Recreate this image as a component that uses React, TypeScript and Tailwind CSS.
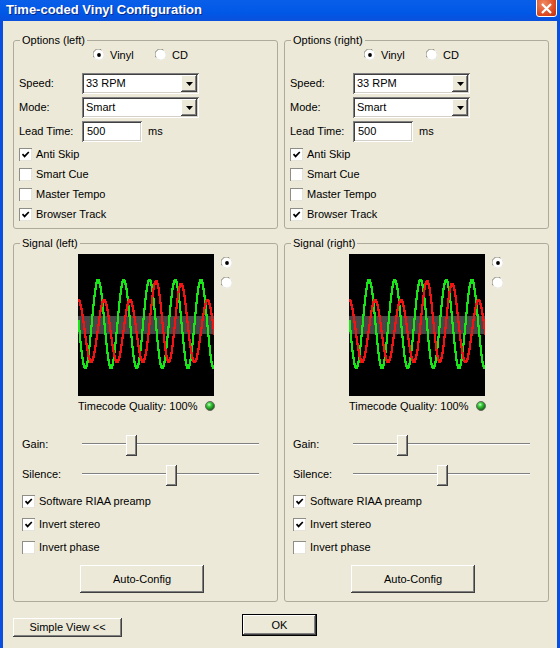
import React from "react"

const SCOPE_W = 136
const SCOPE_H = 142

// staircase path, the scope is drawn one pixel column at a time
function stairs(fn: (x: number) => number) {
  let d = `M0,${Math.round(fn(0))}`
  for (let x = 1; x <= SCOPE_W; x++) {
    d += `H${x}V${Math.round(fn(x))}`
  }
  return d
}

const greenWave = (x: number) => 70 - 44 * Math.cos((2 * Math.PI * (x - 19.6)) / 25.7)

const redWave = (x: number) => {
  const bump = Math.exp(-Math.pow((x - 89) / 20, 4))
  const peak = 46 - 21 * bump
  const trough = 108
  const c = (peak + trough) / 2
  const a = (trough - peak) / 2
  return c - a * Math.cos((2 * Math.PI * (x - 25.6)) / 25.85)
}

const GREEN_D = stairs(greenWave)
const RED_D = stairs(redWave)

function Scope() {
  return (
    <svg width={SCOPE_W} height={SCOPE_H} className="block bg-black" shapeRendering="crispEdges">
      <rect x={0} y={62} width={SCOPE_W} height={18} fill="#474747" />
      <path d={GREEN_D} fill="none" stroke="#19e619" strokeWidth={2} />
      <path d={RED_D} fill="none" stroke="#f01414" strokeWidth={2} />
    </svg>
  )
}

function Radio({ checked }: { checked?: boolean }) {
  return (
    <svg width={12} height={12} className="block shrink-0">
      <circle cx={6} cy={6} r={5.5} fill="#fff" />
      <path d="M1.2 8.5 A5.2 5.2 0 0 1 8.5 1.2" fill="none" stroke="#8a8a82" strokeWidth={1} />
      <path d="M2.3 9.6 A5.2 5.2 0 0 0 9.8 2.4" fill="none" stroke="#e4e2d8" strokeWidth={1} />
      {checked && <circle cx={6} cy={6} r={1.9} fill="#000" />}
    </svg>
  )
}

function Checkbox({ checked, label }: { checked?: boolean; label: string }) {
  return (
    <div className="flex items-center gap-[4px]">
      <div className="w-[13px] h-[13px] bg-white flex items-center justify-center shadow-[inset_1px_1px_0_#8e8e86,inset_-1px_-1px_0_#e6e4da]">
        {checked && (
          <svg width={9} height={9}>
            <path d="M1.5 4.2 L3.6 6.4 L7.8 2" fill="none" stroke="#000" strokeWidth={1.7} />
          </svg>
        )}
      </div>
      <span className="whitespace-nowrap">{label}</span>
    </div>
  )
}

function Select({ value }: { value: string }) {
  return (
    <div className="w-[117px] h-[21px] flex bg-white p-[2px] shadow-[inset_1px_1px_0_#808080,inset_-1px_-1px_0_#fff,inset_2px_2px_0_#404040,inset_-2px_-2px_0_#d4d0c8]">
      <span className="flex-1 pl-[2px] leading-[17px]">{value}</span>
      <div className="w-[16px] h-[17px] bg-[#ece9d8] flex items-center justify-center shadow-[inset_-1px_-1px_0_#404040,inset_1px_1px_0_#fff,inset_-2px_-2px_0_#808080]">
        <svg width={7} height={4}>
          <path d="M0 0 H7 L3.5 4 Z" fill="#000" />
        </svg>
      </div>
    </div>
  )
}

function Button({ label, className, isDefault }: { label: string; className: string; isDefault?: boolean }) {
  return (
    <div
      className={
        "flex items-center justify-center bg-[#ece9d8] " +
        (isDefault
          ? "border border-black shadow-[inset_-1px_-1px_0_#404040,inset_1px_1px_0_#fff,inset_-2px_-2px_0_#808080] "
          : "shadow-[inset_-1px_-1px_0_#404040,inset_1px_1px_0_#fff,inset_-2px_-2px_0_#808080] ") +
        className
      }
    >
      {label}
    </div>
  )
}

function Slider({ thumb }: { thumb: number }) {
  return (
    <div className="relative w-[177px] h-[24px]">
      <div className="absolute left-0 right-0 top-[11px] h-[2px] border-t border-[#808080] bg-white" />
      <div
        className="absolute top-[3px] w-[11px] h-[21px] bg-[#ece9d8] shadow-[inset_-1px_-1px_0_#404040,inset_1px_1px_0_#fff,inset_-2px_-2px_0_#808080]"
        style={{ left: thumb }}
      />
    </div>
  )
}

function Led() {
  return (
    <svg width={10} height={10} className="block">
      <defs>
        <radialGradient id="led" cx="40%" cy="35%" r="65%">
          <stop offset="0%" stopColor="#c8ffc8" />
          <stop offset="35%" stopColor="#3ccf3c" />
          <stop offset="100%" stopColor="#0b5c0b" />
        </radialGradient>
      </defs>
      <circle cx={5} cy={5} r={4.5} fill="url(#led)" stroke="#6b6b63" strokeWidth={1} />
    </svg>
  )
}

function OptionsGroup({ side }: { side: string }) {
  return (
    <fieldset className="w-[265px] min-w-0 border border-[#aeab9d] rounded-[3px] pl-[5px] pb-[4px]">
      <legend className="ml-[1px] px-[2px] leading-[13px]">Options ({side})</legend>
      <div className="h-[16px] flex items-center pl-[74px]">
        <div className="w-[62px] flex items-center gap-[5px]">
          <Radio checked />
          <span>Vinyl</span>
        </div>
        <div className="flex items-center gap-[5px]">
          <Radio />
          <span>CD</span>
        </div>
      </div>
      <div className="mt-[10px] flex items-center">
        <span className="w-[63px]">Speed:</span>
        <Select value="33 RPM" />
      </div>
      <div className="mt-[3px] flex items-center">
        <span className="w-[63px]">Mode:</span>
        <Select value="Smart" />
      </div>
      <div className="mt-[3px] flex items-center">
        <span className="w-[63px]">Lead Time:</span>
        <div className="w-[60px] h-[21px] bg-white pl-[5px] leading-[21px] shadow-[inset_1px_1px_0_#808080,inset_-1px_-1px_0_#fff,inset_2px_2px_0_#404040,inset_-2px_-2px_0_#d4d0c8]">
          500
        </div>
        <span className="ml-[6px]">ms</span>
      </div>
      <div className="mt-[2px] flex flex-col">
        <div className="h-[20px] flex items-center"><Checkbox checked label="Anti Skip" /></div>
        <div className="h-[20px] flex items-center"><Checkbox label="Smart Cue" /></div>
        <div className="h-[20px] flex items-center"><Checkbox label="Master Tempo" /></div>
        <div className="h-[20px] flex items-center"><Checkbox checked label="Browser Track" /></div>
      </div>
    </fieldset>
  )
}

function SignalGroup({ side }: { side: string }) {
  return (
    <fieldset className="w-[265px] min-w-0 border border-[#aeab9d] rounded-[3px] pl-[5px] pb-[8px]">
      <legend className="ml-[1px] px-[2px] leading-[13px]">Signal ({side})</legend>
      <div className="mt-[4px] flex items-start pl-[59px]">
        <Scope />
        <div className="ml-[7px] pt-[3px] flex flex-col gap-[8px]">
          <Radio checked />
          <Radio />
        </div>
      </div>
      <div className="h-[20px] flex items-center pl-[59px]">
        <span>Timecode Quality: 100%</span>
        <div className="ml-[8px]">
          <Led />
        </div>
      </div>
      <div className="mt-[16px] h-[24px] flex items-center pl-[3px]">
        <span className="w-[60px]">Gain:</span>
        <Slider thumb={44} />
      </div>
      <div className="mt-[6px] h-[24px] flex items-center pl-[3px]">
        <span className="w-[60px]">Silence:</span>
        <Slider thumb={84} />
      </div>
      <div className="mt-[4px] flex flex-col pl-[3px]">
        <div className="h-[23px] flex items-center"><Checkbox checked label="Software RIAA preamp" /></div>
        <div className="h-[23px] flex items-center"><Checkbox checked label="Invert stereo" /></div>
        <div className="h-[23px] flex items-center"><Checkbox label="Invert phase" /></div>
      </div>
      <div className="mt-[6px] pl-[61px]">
        <Button label="Auto-Config" className="w-[124px] h-[28px]" />
      </div>
    </fieldset>
  )
}

export default function App() {
  return (
    <div className="w-[560px] h-[648px] overflow-hidden flex flex-col bg-[#0a4fe0] font-['Liberation_Sans',Arial,sans-serif] text-[11px] text-black">
      {/* Title bar */}
      <div className="h-[21px] shrink-0 flex items-start bg-[linear-gradient(to_bottom,#0a5fe9,#0058e6_60%,#0a50dc)]">
        <span className="ml-[6px] mt-[3px] leading-[13px] text-[13px] font-bold text-white [text-shadow:1px_1px_0_#0b2a8c]">
          Time-coded Vinyl Configuration
        </span>
        <div className="ml-auto mr-[3px] -mt-[4px] w-[21px] h-[21px] rounded-[3px] border border-white bg-[radial-gradient(circle_at_35%_35%,#f08a62,#d9441c_70%,#b8320f)] flex items-center justify-center">
          <svg width={11} height={11} className="mt-[3px]">
            <path d="M1 1 L10 10 M10 1 L1 10" stroke="#fff" strokeWidth={2.2} />
          </svg>
        </div>
      </div>

      {/* Client area */}
      <div className="flex-1 mx-[3px] bg-[#ece9d8] pt-[13px] pl-[10px]">
        <div className="flex gap-[6px]">
          <OptionsGroup side="left" />
          <OptionsGroup side="right" />
        </div>
        <div className="mt-[8px] flex gap-[6px]">
          <SignalGroup side="left" />
          <SignalGroup side="right" />
        </div>
        <div className="mt-[12px] flex items-start">
          <Button label="Simple View <<" className="mt-[4px] w-[109px] h-[19px]" />
          <Button label="OK" isDefault className="ml-[120px] w-[75px] h-[22px]" />
        </div>
      </div>
    </div>
  )
}
